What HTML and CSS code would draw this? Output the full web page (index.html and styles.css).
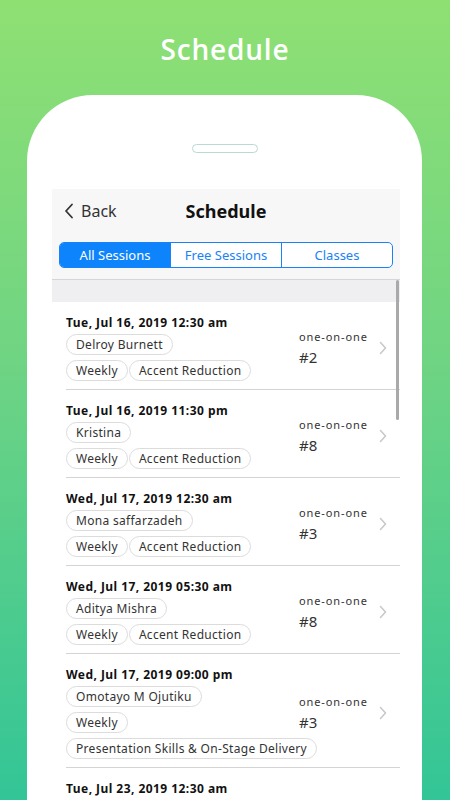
FILE: index.html
```html
<!DOCTYPE html>
<html>
<head>
    <meta charset="UTF-8">
    <meta name="viewport" content="width=device-width, initial-scale=1.0">
    <title>Schedule</title>
    <link rel="stylesheet" href="styles.css">
</head>
<body>
    <h1 class="promo-title">Schedule</h1>
    <div class="phone">
        <div class="speaker"></div>
        <div class="screen">
            <div class="header">
                <div class="navbar">
                    <div class="back">
                        <svg width="10" height="16" viewBox="0 0 10 16"><path d="M8 1.5 L2 8 L8 14.5" fill="none" stroke="#333" stroke-width="1.8" stroke-linecap="round" stroke-linejoin="round"/></svg>
                        <span>Back</span>
                    </div>
                    <div class="nav-title">Schedule</div>
                </div>
                <div class="segments">
                    <div class="segment active">All Sessions</div>
                    <div class="segment">Free Sessions</div>
                    <div class="segment">Classes</div>
                </div>
            </div>
            <div class="band"></div>
            <div class="list">
                <div class="session">
                    <div class="session-main">
                        <div class="session-date">Tue, Jul 16, 2019 12:30 am</div>
                        <div class="chips"><span class="chip">Delroy Burnett</span></div>
                        <div class="chips"><span class="chip">Weekly</span><span class="chip">Accent Reduction</span></div>
                    </div>
                    <div class="session-side">
                        <div class="session-type">one-on-one</div>
                        <div class="session-num">#2</div>
                    </div>
                    <svg class="chevron" width="8" height="14" viewBox="0 0 8 14"><path d="M1.5 1.5 L6.5 7 L1.5 12.5" fill="none" stroke="#c7c7cc" stroke-width="1.5" stroke-linecap="round" stroke-linejoin="round"/></svg>
                </div>
                <div class="session">
                    <div class="session-main">
                        <div class="session-date">Tue, Jul 16, 2019 11:30 pm</div>
                        <div class="chips"><span class="chip">Kristina</span></div>
                        <div class="chips"><span class="chip">Weekly</span><span class="chip">Accent Reduction</span></div>
                    </div>
                    <div class="session-side">
                        <div class="session-type">one-on-one</div>
                        <div class="session-num">#8</div>
                    </div>
                    <svg class="chevron" width="8" height="14" viewBox="0 0 8 14"><path d="M1.5 1.5 L6.5 7 L1.5 12.5" fill="none" stroke="#c7c7cc" stroke-width="1.5" stroke-linecap="round" stroke-linejoin="round"/></svg>
                </div>
                <div class="session">
                    <div class="session-main">
                        <div class="session-date">Wed, Jul 17, 2019 12:30 am</div>
                        <div class="chips"><span class="chip">Mona saffarzadeh</span></div>
                        <div class="chips"><span class="chip">Weekly</span><span class="chip">Accent Reduction</span></div>
                    </div>
                    <div class="session-side">
                        <div class="session-type">one-on-one</div>
                        <div class="session-num">#3</div>
                    </div>
                    <svg class="chevron" width="8" height="14" viewBox="0 0 8 14"><path d="M1.5 1.5 L6.5 7 L1.5 12.5" fill="none" stroke="#c7c7cc" stroke-width="1.5" stroke-linecap="round" stroke-linejoin="round"/></svg>
                </div>
                <div class="session">
                    <div class="session-main">
                        <div class="session-date">Wed, Jul 17, 2019 05:30 am</div>
                        <div class="chips"><span class="chip">Aditya Mishra</span></div>
                        <div class="chips"><span class="chip">Weekly</span><span class="chip">Accent Reduction</span></div>
                    </div>
                    <div class="session-side">
                        <div class="session-type">one-on-one</div>
                        <div class="session-num">#8</div>
                    </div>
                    <svg class="chevron" width="8" height="14" viewBox="0 0 8 14"><path d="M1.5 1.5 L6.5 7 L1.5 12.5" fill="none" stroke="#c7c7cc" stroke-width="1.5" stroke-linecap="round" stroke-linejoin="round"/></svg>
                </div>
                <div class="session">
                    <div class="session-main">
                        <div class="session-date">Wed, Jul 17, 2019 09:00 pm</div>
                        <div class="chips"><span class="chip">Omotayo M Ojutiku</span></div>
                        <div class="chips"><span class="chip">Weekly</span></div>
                        <div class="chips"><span class="chip">Presentation Skills &amp; On-Stage Delivery</span></div>
                    </div>
                    <div class="session-side">
                        <div class="session-type">one-on-one</div>
                        <div class="session-num">#3</div>
                    </div>
                    <svg class="chevron" width="8" height="14" viewBox="0 0 8 14"><path d="M1.5 1.5 L6.5 7 L1.5 12.5" fill="none" stroke="#c7c7cc" stroke-width="1.5" stroke-linecap="round" stroke-linejoin="round"/></svg>
                </div>
                <div class="session">
                    <div class="session-main">
                        <div class="session-date">Tue, Jul 23, 2019 12:30 am</div>
                    </div>
                </div>
            </div>
            <div class="scrollbar"></div>
        </div>
    </div>
</body>
</html>
```

FILE: styles.css
```css
/* page background */
body {
    margin: 0;
    height: 800px;
    overflow: hidden;
    background: linear-gradient(180deg, #8fe073 0%, #6fd483 45%, #33c597 100%);
    font-family: "Noto Sans", Arial, sans-serif;
}

.promo-title {
    margin: 0;
    padding-top: 30px;
    height: 64px;
    box-sizing: border-box;
    text-align: center;
    color: #fff;
    font-family: "Open Sans", sans-serif;
    font-weight: 600;
    font-size: 28px;
    line-height: 38px;
    letter-spacing: 0.8px;
}

/* phone frame */
.phone {
    margin: 31px 0 0 27px;
    width: 395px;
    height: 760px;
    background: #fff;
    border-radius: 66px 66px 0 0;
    padding: 49px 22px 0 25px;
    box-sizing: border-box;
}

.speaker {
    width: 64px;
    height: 7px;
    margin: 0 0 36px 140px;
    border: 1px solid #b9d9d6;
    border-radius: 5px;
}

.screen {
    position: relative;
    width: 348px;
    height: 620px;
    background: #fff;
}

/* nav */
.header {
    background: #f7f7f8;
    padding: 0 7px 11px;
    border-bottom: 1px solid #d6d6da;
}

.navbar {
    height: 43px;
    display: flex;
    align-items: center;
    position: relative;
}

.back {
    display: flex;
    align-items: center;
    gap: 7px;
    padding-left: 5px;
    color: #333;
    font-size: 16px;
}

.nav-title {
    position: absolute;
    left: 0;
    right: 0;
    text-align: center;
    font-size: 18px;
    font-weight: 700;
    color: #111;
    pointer-events: none;
}

.segments {
    margin-top: 10px;
    height: 26px;
    display: flex;
    border: 1px solid #1a82f5;
    border-radius: 5px;
    overflow: hidden;
    background: #fff;
    box-sizing: border-box;
}

.segment {
    flex: 1;
    display: flex;
    align-items: center;
    justify-content: center;
    font-size: 13px;
    color: #1a82f5;
    border-left: 1px solid #1a82f5;
}

.segment:first-child {
    border-left: none;
}

.segment.active {
    background: #0d84fb;
    color: #fff;
}

.band {
    height: 22px;
    background: #efeff2;
}

/* list */
.session {
    display: flex;
    align-items: center;
    margin-left: 14px;
    padding: 13px 0 8px;
    border-bottom: 1px solid #d4d4d4;
}

.session:last-child {
    border-bottom: none;
}

.session-main {
    flex: 1;
    min-width: 0;
}

.session-date {
    font-size: 12px;
    font-weight: 700;
    line-height: 16px;
    color: #111;
    margin-bottom: 3px;
    letter-spacing: 0.45px;
}

.chips {
    display: flex;
    gap: 1px;
    margin-top: 5px;
}

.chips:nth-child(2) {
    margin-top: 0;
}

.chip {
    height: 21px;
    line-height: 19px;
    padding: 0 9px;
    border: 1px solid #dcdcdc;
    border-radius: 11px;
    box-sizing: border-box;
    font-size: 12px;
    color: #333;
    letter-spacing: 0.3px;
    white-space: nowrap;
}

.session-side {
    flex-shrink: 0;
    width: 80px;
    color: #333;
}

.session-type {
    font-size: 11px;
    letter-spacing: 0.9px;
    line-height: 16px;
    white-space: nowrap;
}

.session-num {
    font-size: 15px;
    line-height: 20px;
    margin-top: 2px;
}

.chevron {
    flex-shrink: 0;
    margin-right: 13px;
}

.scrollbar {
    position: absolute;
    left: 344px;
    top: 91px;
    width: 3px;
    height: 140px;
    background: #a9a9a9;
    border-radius: 2px;
}
```
